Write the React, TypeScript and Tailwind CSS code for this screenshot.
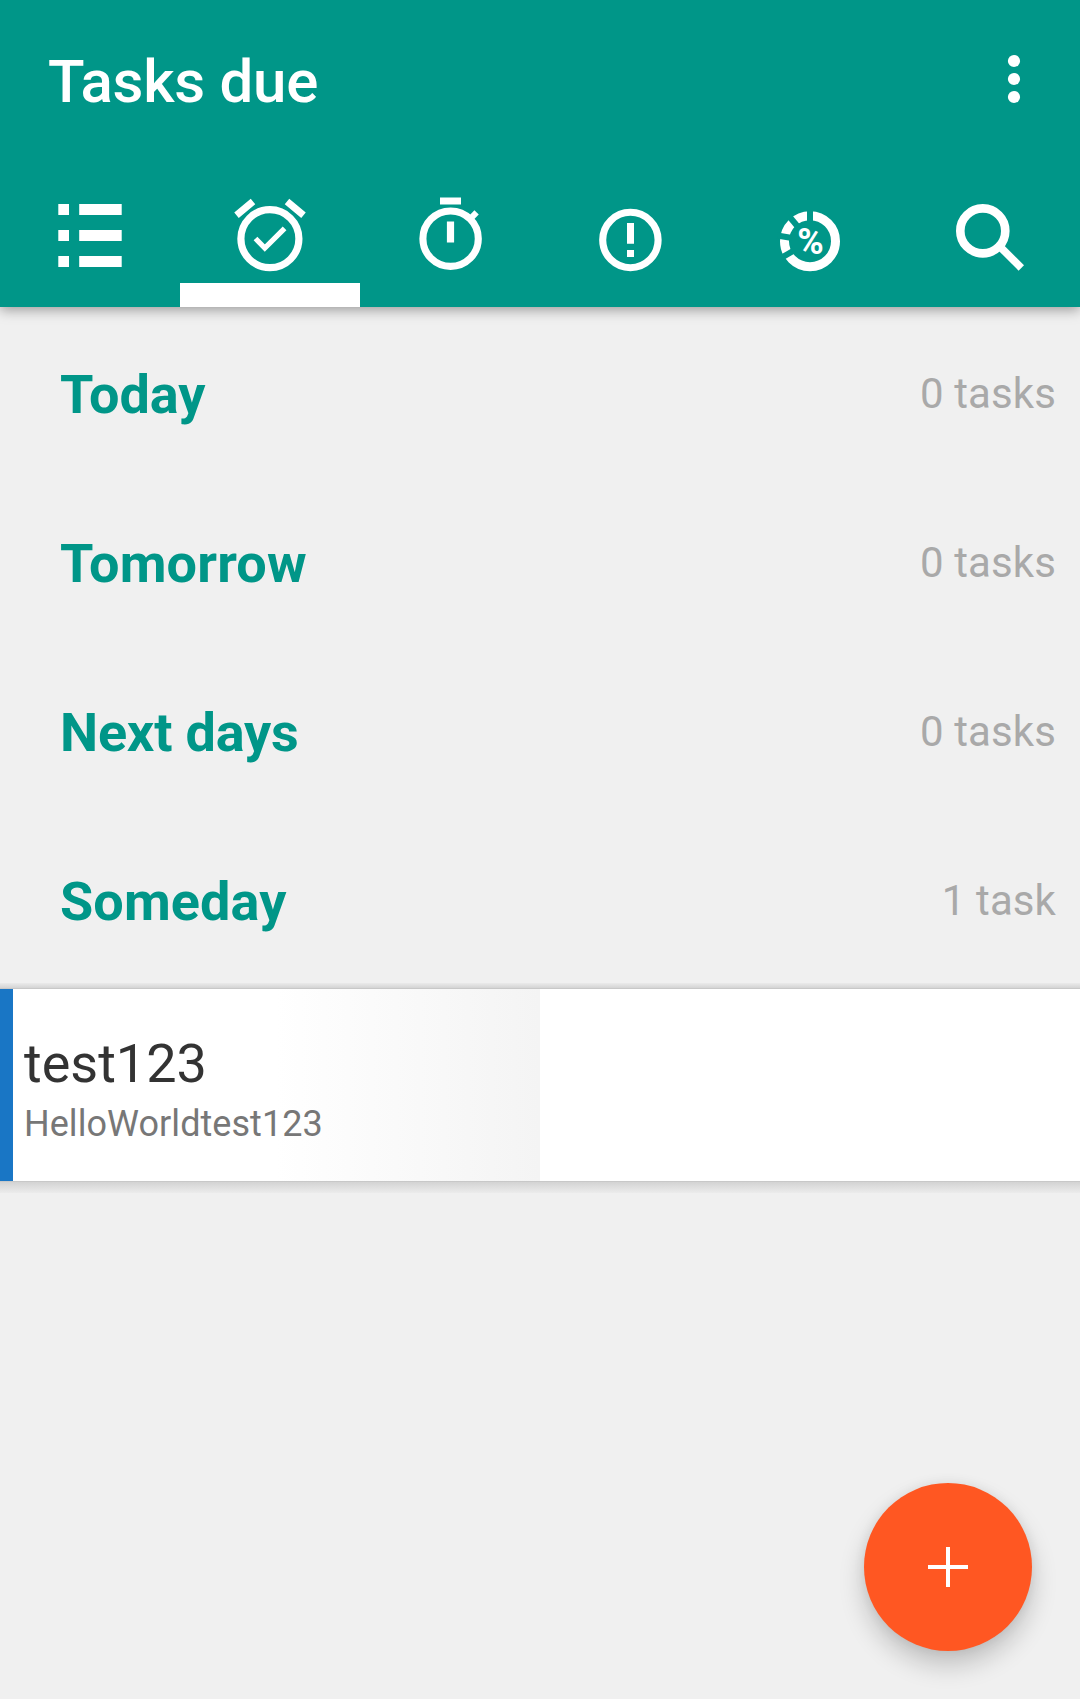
import type { ReactNode } from 'react';

const groups = [
  { name: 'Today', count: '0 tasks', tracking: '' },
  { name: 'Tomorrow', count: '0 tasks', tracking: 'tracking-[0.15px]' },
  { name: 'Next days', count: '0 tasks', tracking: 'tracking-[-0.2px]' },
  { name: 'Someday', count: '1 task', tracking: 'tracking-[0.1px]' },
];

const Icon = ({ children }: { children: ReactNode }) => (
  <svg viewBox="0 0 180 140" className="h-[140px] w-[180px] shrink-0" fill="none" stroke="#fff">
    {children}
  </svg>
);

const gapAngles = [0, -40, -80, -120];

export default function App() {
  return (
    <div className="relative flex h-[1699px] w-[1080px] flex-col overflow-hidden bg-[#f0f0f0] font-['Roboto',sans-serif]">
      <header className="relative z-10 flex h-[307px] shrink-0 flex-col bg-[#009688] shadow-[0_3px_12px_rgba(0,0,0,0.36)]">
        <div className="flex h-[167px] items-center justify-between pl-[48px] pr-[59px]">
          <h1 className="-mt-[4px] text-[60px] font-medium leading-none tracking-[-0.25px] text-white">Tasks due</h1>
          <svg viewBox="0 0 14 50" className="-mt-[9px] h-[50px] w-[14px]" fill="#fff">
            <circle cx="7" cy="7" r="6.1" />
            <circle cx="7" cy="25" r="6.1" />
            <circle cx="7" cy="43" r="6.1" />
          </svg>
        </div>
        <nav className="flex h-[140px]">
          <Icon>
            <path
              fill="#fff"
              stroke="none"
              d="M58.3 37H69v11H58.3zM79.2 37h42.5v11H79.2zM58.3 63H69v11H58.3zM79.2 63h42.5v11H79.2zM58.3 89H69v11H58.3zM79.2 89h42.5v11H79.2z"
            />
          </Icon>
          <Icon>
            <circle cx="89.9" cy="71.7" r="29" strokeWidth="7.2" />
            <path strokeWidth="7" d="M56.5 48.3L73 34.5M123.5 48.3L107 34.5" />
            <path strokeWidth="5.2" d="M75.5 71.5l9.3 9.6 19.8-19.8" />
            <path fill="#fff" stroke="none" d="M0 116h180v24H0z" />
          </Icon>
          <Icon>
            <circle cx="90.6" cy="71.7" r="27.7" strokeWidth="7.1" />
            <path strokeWidth="7.2" d="M80 34h21M90.5 54.5v21" />
            <path strokeWidth="6" d="M110 52.2l6.6-6.8" />
          </Icon>
          <Icon>
            <circle cx="90.4" cy="73" r="27.7" strokeWidth="7.1" />
            <path strokeWidth="7" d="M90.5 56v20.7M90.5 83v7" />
          </Icon>
          <Icon>
            <circle cx="90" cy="74.2" r="25.5" strokeWidth="9" />
            {gapAngles.map((a) => (
              <path key={a} stroke="#009688" strokeWidth="6" d="M90 56V41" transform={`rotate(${a} 90 74.2)`} />
            ))}
            <text
              x="77.2"
              y="87"
              fill="#fff"
              stroke="none"
              fontSize="37.5"
              fontWeight="700"
              textLength="26.5"
              lengthAdjust="spacingAndGlyphs"
            >
              %
            </text>
          </Icon>
          <Icon>
            <circle cx="82.8" cy="63.9" r="22.5" strokeWidth="8.6" />
            <path strokeWidth="7.6" d="M99 78.7L121.3 101" />
          </Icon>
        </nav>
      </header>
      <main>
        {groups.map(({ name, count, tracking }) => (
          <section key={name} className="flex h-[169px] items-center justify-between pl-[60px] pr-[24px] pt-[5px]">
            <h2 className={`pt-[2px] text-[54px] font-bold leading-none text-[#009688] ${tracking}`}>{name}</h2>
            <span className="text-[42px] leading-none tracking-[0.1px] text-[#a9a9a9]">{count}</span>
          </section>
        ))}
        <div className="h-[5px] bg-linear-to-b from-[#eaeaea] to-[#d4d4d4]" />
        <div className="h-px bg-[#c8c8c8]" />
        <article className="flex h-[192px] bg-white">
          <div className="w-[13px] bg-[#1976c5]" />
          <div className="flex w-[527px] flex-col bg-linear-to-r from-white from-50% to-[#f4f4f4] pl-[11px] pt-[45px]">
            <p className="text-[54px] leading-[60px] text-[#333]">test123</p>
            <p className="text-[36px] leading-[60px] tracking-[0.05px] text-[#777]">HelloWorldtest123</p>
          </div>
        </article>
        <div className="h-px bg-[#c8c8c8]" />
        <div className="h-[11px] bg-linear-to-b from-[#d3d3d3] to-[#ececec]" />
      </main>
      <button className="absolute left-[864px] top-[1483px] flex size-[168px] items-center justify-center rounded-full bg-[#ff5722] shadow-[0_14px_26px_rgba(0,0,0,0.2),0_0_12px_rgba(0,0,0,0.07)]">
        <svg viewBox="0 0 40 40" className="size-[40px]" stroke="#fff" strokeWidth="4">
          <path d="M20 0v40M0 20h40" />
        </svg>
      </button>
    </div>
  );
}
